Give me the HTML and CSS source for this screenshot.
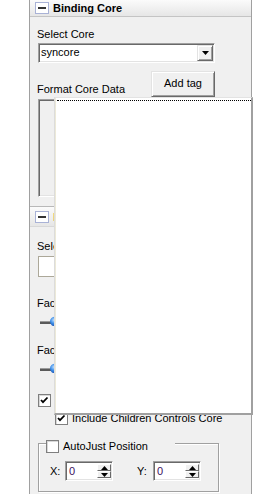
FILE: index.html
```html
<!DOCTYPE html>
<html>
<head>
<meta charset="utf-8">
<link rel="stylesheet" href="styles.css">
</head>
<body>
<div class="panel">
  <div class="hdr">
    <span class="minus"><span class="bar"></span></span>
    <span class="title">Binding Core</span>
  </div>
  <div class="sec1">
    <div class="lbl first">Select Core</div>
    <div class="combo">
      <span class="combo-text">syncore</span>
      <span class="ddbtn"><svg width="7" height="4" viewBox="0 0 7 4"><path d="M0 0h7L3.5 4z" fill="#000"/></svg></span>
    </div>
    <div class="fmtrow">
      <span class="lbl fmt">Format Core Data</span>
      <span class="btn">Add tag</span>
    </div>
    <div class="textarea"></div>
  </div>
  <div class="hdr hdr2">
    <span class="minus"><span class="bar"></span></span>
    <span class="title orange">Binding Face</span>
  </div>
  <div class="sec2">
    <div class="lbl sel">Select Face</div>
    <div class="box"></div>
    <div class="lbl fac">Face Scale</div>
    <div class="slider"><svg width="30" height="10" viewBox="0 0 30 10"><defs><radialGradient id="k" cx="0.4" cy="0.35" r="0.7"><stop offset="0" stop-color="#bfe0ff"/><stop offset="0.5" stop-color="#3d8ee8"/><stop offset="1" stop-color="#1a4fb0"/></radialGradient></defs><rect x="0" y="5" width="11" height="3" fill="#5a5a5a"/><rect x="0" y="5" width="11" height="1" fill="#9a9a9a"/><ellipse cx="15" cy="5.5" rx="5" ry="4.8" fill="url(#k)"/></svg></div>
    <div class="lbl fac2">Face Offset</div>
    <div class="slider"><svg width="30" height="10" viewBox="0 0 30 10"><rect x="0" y="5" width="11" height="3" fill="#5a5a5a"/><rect x="0" y="5" width="11" height="1" fill="#9a9a9a"/><ellipse cx="15" cy="5.5" rx="5" ry="4.8" fill="url(#k)"/></svg></div>
    <div class="chkrow">
      <span class="chk"><svg width="11" height="11" viewBox="0 0 11 11"><path d="M2 5l2 2.2L8.5 2.5" fill="none" stroke="#000" stroke-width="1.8"/></svg></span>
      <span class="chklbl">Use Face Core</span>
    </div>
    <div class="chkrow inc">
      <span class="chk"><svg width="11" height="11" viewBox="0 0 11 11"><path d="M2 5l2 2.2L8.5 2.5" fill="none" stroke="#000" stroke-width="1.8"/></svg></span>
      <span class="chklbl">Include Children Controls Core</span>
    </div>
    <div class="group">
      <div class="legend">
        <span class="chk"></span>
        <span class="chklbl">AutoJust Position</span>
      </div>
      <div class="spinrow">
        <span class="axis">X:</span>
        <span class="spin"><span class="spin-val">0</span><span class="spin-btns"><span class="sb"><svg width="7" height="4" viewBox="0 0 7 4"><path d="M0 4h7L3.5 0z" fill="#000"/></svg></span><span class="sb"><svg width="7" height="4" viewBox="0 0 7 4"><path d="M0 0h7L3.5 4z" fill="#000"/></svg></span></span></span>
        <span class="axis y">Y:</span>
        <span class="spin"><span class="spin-val">0</span><span class="spin-btns"><span class="sb"><svg width="7" height="4" viewBox="0 0 7 4"><path d="M0 4h7L3.5 0z" fill="#000"/></svg></span><span class="sb"><svg width="7" height="4" viewBox="0 0 7 4"><path d="M0 0h7L3.5 4z" fill="#000"/></svg></span></span></span>
      </div>
    </div>
  </div>
</div>
<div class="popup"><div class="dots"></div></div>
</body>
</html>
```
FILE: styles.css
```css
* { box-sizing: border-box; }
html, body { margin: 0; padding: 0; }
body {
  background: #fff;
  font: 11px/13px "Liberation Sans", Arial, sans-serif;
  color: #000;
  position: relative;
  width: 254px;
  height: 494px;
  overflow: hidden;
}
.panel {
  margin-left: 29px;
  width: 223px;
  height: 494px;
  border-left: 1px solid #a0a0a0;
  border-right: 1px solid #a0a0a0;
  background: #f0f0f0;
}
.hdr {
  height: 17px;
  border-bottom: 1px solid #c4c4c4;
  background: linear-gradient(#fbfbfb, #e6e6e6);
  display: flex;
  align-items: center;
  padding-left: 5px;
  gap: 4px;
}
.hdr2 {
  height: 21px;
  border-top: 1px solid #b8b8b8;
  border-bottom: 1px solid #d8d8d8;
  align-items: flex-start;
  padding-top: 4px;
}
.minus {
  width: 14px;
  height: 12px;
  border: 1px solid #a9b2d6;
  background: #fff;
  display: flex;
  align-items: center;
  justify-content: center;
}
.bar { width: 8px; height: 2px; background: #333; }
.title { font-weight: bold; font-size: 11px; }
.orange { color: #f0a040; }
.sec1 { padding: 0 36px 9px 8px; }
.lbl { white-space: nowrap; }
.first { margin-top: 11px; margin-left: -1px; }
.combo {
  margin-top: 2px;
  height: 20px;
  background: #fff;
  border: 1px solid;
  border-color: #a0a0a0 #fff #fff #a0a0a0;
  box-shadow: inset 1px 1px #696969, inset -1px -1px #e3e3e3;
  display: flex;
  align-items: center;
  justify-content: space-between;
  padding: 0 1px 0 2px;
}
.combo-text { padding-bottom: 1px; }
.ddbtn {
  width: 16px;
  height: 16px;
  background: #f0f0f0;
  border: 1px solid;
  border-color: #e3e3e3 #696969 #696969 #e3e3e3;
  box-shadow: inset 1px 1px #fff, inset -1px -1px #a0a0a0;
  display: flex;
  align-items: center;
  justify-content: center;
}
.fmtrow {
  margin-top: 8px;
  display: flex;
  justify-content: space-between;
  align-items: flex-end;
}
.fmt { margin-bottom: 1px; margin-left: -1px; }
.btn {
  width: 64px;
  height: 26px;
  background: #f0f0f0;
  border: 1px solid;
  border-color: #e3e3e3 #696969 #696969 #e3e3e3;
  box-shadow: inset 1px 1px #fff, inset -1px -1px #a0a0a0;
  display: flex;
  align-items: center;
  justify-content: center;
  padding-bottom: 1px;
}
.textarea {
  margin-top: 2px;
  height: 98px;
  background: #f0f0f0;
  border: 1px solid;
  border-color: #a0a0a0 #fff #fff #a0a0a0;
  box-shadow: inset 1px 1px #696969, inset -1px -1px #e3e3e3;
}
.sec2 { padding: 0 0 0 8px; }
.sel { margin-top: 13px; margin-left: -1px; }
.box {
  margin-top: 3px;
  width: 60px;
  height: 21px;
  background: #fff;
  border: 1px solid #aca899;
}
.fac { margin-top: 20px; margin-left: -1px; }
.fac2 { margin-top: 18px; margin-left: -1px; }
.slider { margin-top: 6px; margin-left: 2px; height: 10px; display: flex; }
.chkrow { margin-top: 21px; display: flex; align-items: center; gap: 4px; height: 13px; }
.inc { margin-top: 5px; padding-left: 17px; }
.chk {
  width: 13px;
  height: 13px;
  background: #fff;
  border: 1px solid #7f7f7f;
  box-shadow: inset 1px 1px #d8d8d8;
  display: flex;
  align-items: center;
  justify-content: center;
  flex: none;
}
.chklbl { white-space: nowrap; }
.group {
  margin-top: 18px;
  width: 181px;
  height: 49px;
  border: 1px solid #a0a0a0;
  box-shadow: inset 1px 1px #fff, 1px 1px #fff;
}
.legend {
  margin-top: -4px;
  margin-left: 7px;
  width: 129px;
  height: 13px;
  background: #f0f0f0;
  display: flex;
  align-items: center;
  gap: 4px;
}
.spinrow {
  margin-top: 8px;
  padding-left: 11px;
  display: flex;
  align-items: center;
}
.axis { width: 15px; }
.axis.y { margin-left: 24px; width: 16px; }
.spin {
  width: 48px;
  height: 20px;
  background: #fff;
  border: 1px solid;
  border-color: #a0a0a0 #fff #fff #a0a0a0;
  box-shadow: inset 1px 1px #696969, inset -1px -1px #e3e3e3;
  display: flex;
  justify-content: space-between;
  padding: 2px 1px 2px 3px;
}
.spin-val { color: #3b1060; line-height: 14px; }
.spin-btns { display: flex; flex-direction: column; width: 14px; }
.sb {
  flex: 1;
  background: #f0f0f0;
  border: 1px solid;
  border-color: #fff #696969 #696969 #fff;
  display: flex;
  align-items: center;
  justify-content: center;
}
.popup {
  position: absolute;
  left: 54px;
  top: 97px;
  width: 199px;
  height: 318px;
  background: #fff;
  border-top: 1px solid #e3e3e3;
  border-left: 1px solid #dcdcdc;
  border-right: 2px solid #a0a0a0;
  border-bottom: 2px solid #a0a0a0;
  box-shadow: inset 1px 0 #ece9d8;
  padding: 2px 0 0 2px;
}
.dots { border-top: 1px dotted #000; }
```
